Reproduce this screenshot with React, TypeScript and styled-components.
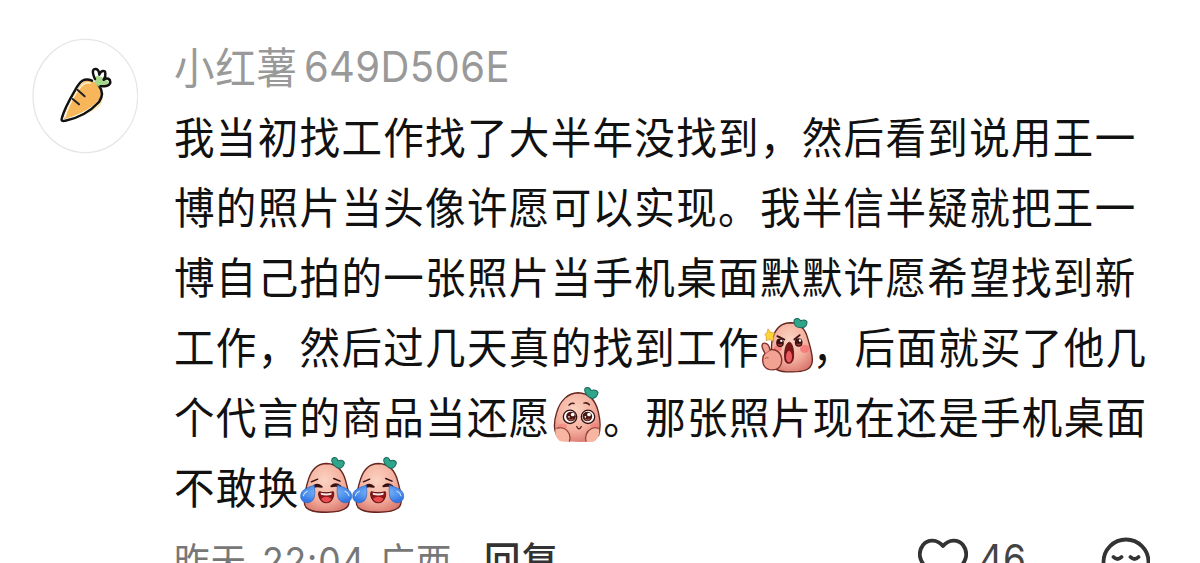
import React, { FC, ReactNode } from 'react';
import styled, { createGlobalStyle } from 'styled-components';

const GlobalStyle = createGlobalStyle`
  html, body {
    margin: 0;
    background: #fff;
  }
`;

const CommentContainer = styled.div`
  display: flex;
  box-sizing: border-box;
  width: 1200px;
  height: 563px;
  padding: 38px 0 0 32px;
  overflow: hidden;
  background: #fff;
  font-family: Inter, 'Noto Sans CJK SC', sans-serif;
`;

const Avatar = styled.svg`
  flex: none;
  width: 106px;
  height: 116px;
`;

const Content = styled.div`
  flex: none;
  width: 990px;
  margin-left: 36px;
`;

// glyphs are a little taller than they are wide
const Row = styled.div`
  display: flex;
  align-items: center;
  white-space: pre;
  transform: scaleY(1.07);
`;

const UserName = styled(Row)`
  height: 54px;
  margin-bottom: 8px;
  color: #999;
  font-size: 40.5px;
  letter-spacing: 0.8px;
`;

const Latin = styled.span`
  margin-top: 3px;
  margin-left: 6px;
  font-size: 40px;
  font-weight: 400;
  letter-spacing: 0.4px;
`;

const Line = styled(Row)`
  height: 70px;
  color: #111;
  font-family: 'Noto Sans CJK SC', sans-serif;
  font-size: 40.5px;
  font-weight: 400;
  letter-spacing: 1.35px;
`;

const Sticker = styled.svg`
  flex: none;
  width: 52.7px;
  height: 54px;
`;

const Footer = styled.div`
  display: flex;
  align-items: center;
  height: 60px;
  margin-top: 11px;
`;

const Meta = styled(Row)`
  width: 310px;
  margin-top: -5px;
  color: #777;
  font-size: 35.5px;
  letter-spacing: 1px;
`;

const Time = styled.span`
  margin: 5px 14px 0 15px;
  font-weight: 400;
  letter-spacing: 0.9px;
`;

const Reply = styled(Row)`
  width: 434px;
  margin-top: -5px;
  color: #333;
  font-size: 36.5px;
  font-weight: 500;
  letter-spacing: 1px;
`;

const Count = styled(Row)`
  width: 121px;
  margin-top: -5px;
  margin-left: 11px;
  color: #444;
  font-size: 37px;
`;

const ActionIcon = styled.svg`
  flex: none;
  width: 50px;
  height: 50px;
  fill: none;
  stroke: #333;
  stroke-width: 3.8;
  stroke-linecap: round;
  stroke-linejoin: round;
`;

const CarrotAvatar: FC = () => (
  <Avatar viewBox="36 24 318 348">
    <ellipse cx="196" cy="198" rx="157" ry="170" fill="#fff" stroke="#e6e6e6" strokeWidth="4" />
    <path d="M132 275 Q185 266 239 229 Q254 212 244 186 L236 218 Q195 256 132 275Z" fill="#fde9ad" />
    <path d="M180 166 Q206 137 232 164 Q254 190 232 216 Q190 253 132 268 Q146 217 180 166Z" fill="#f8b65b" />
    <path d="M216 152 C194 142 181 151 165 181 Q134 234 126 263 Q121 276 136 272 Q196 260 237 216 Q255 191 236 166" fill="none" stroke="#111" strokeWidth="7.5" strokeLinecap="round" />
    <path d="M213 160 C195 153 184 166 169 188 Q142 232 135 263" fill="none" stroke="#fff4cf" strokeWidth="4" />
    <path d="M224 159 Q222 146 230 137 Q250 140 267 157 Q257 172 239 172Z" fill="#a5d68a" />
    <path d="M225 147 C214 124 219 115 228 117 Q237 119 238 134 C243 120 255 120 256 129 Q258 139 251 149 C262 141 271 147 271 157 C269 170 253 169 241 169" fill="none" stroke="#111" strokeWidth="7.5" strokeLinecap="round" strokeLinejoin="round" />
    <path d="M173 180 L194 199 M158 207 L177 223" stroke="#222" strokeWidth="6" strokeLinecap="round" />
  </Avatar>
);

const Gradients: FC<{ id: string }> = ({ id }) => (
  <defs>
    <radialGradient id={`${id}-skin`} cx="45%" cy="35%" r="70%">
      <stop offset="0" stopColor="#fbd3c2" />
      <stop offset="0.6" stopColor="#f4af9e" />
      <stop offset="1" stopColor="#da786f" />
    </radialGradient>
    <radialGradient id={`${id}-tear`} cx="50%" cy="40%" r="60%">
      <stop offset="0" stopColor="#93c8ff" />
      <stop offset="1" stopColor="#3478e4" />
    </radialGradient>
  </defs>
);

const ShoutSticker: FC = () => (
  <Sticker viewBox="30 18 158 173" preserveAspectRatio="none">
    <Gradients id="shout" />
    <path d="M68 84 C76 56 95 38 122 38 C150 39 166 58 173 84 C181 112 188 132 187 152 C185 181 158 185 127 185 C96 186 70 182 67 160 C64 137 61 110 68 84Z" fill="url(#shout-skin)" stroke="#64261f" strokeWidth="4" />
    <path d="M136 47 Q127 31 137 26 Q147 22 152 32 Q166 26 171 35 Q172 50 157 53 Q145 54 136 47Z" fill="#2fa58c" stroke="#1c6657" strokeWidth="3" />
    <ellipse cx="164" cy="116" rx="14" ry="12" fill="#f46f70" opacity=".75" />
    <ellipse cx="84" cy="115" rx="12" ry="9" fill="#f46f70" opacity=".7" />
    <path d="M82 78 L103 88 M133 88 L149 75" stroke="#35100f" strokeWidth="5.5" strokeLinecap="round" />
    <ellipse cx="90" cy="98" rx="11.5" ry="13" fill="#3b1010" />
    <ellipse cx="146" cy="97" rx="11.5" ry="13" fill="#3b1010" />
    <path d="M84 102 Q90 108 96 102 M140 101 Q146 107 152 101" fill="none" stroke="#9e3733" strokeWidth="4" />
    <circle cx="94" cy="92" r="3.5" fill="#fff" />
    <circle cx="150" cy="91" r="3.5" fill="#fff" />
    <path d="M118 96 C128 97 133 125 130 144 C128 163 108 164 105 150 C101 129 106 99 118 96Z" fill="#7b1518" stroke="#4b1010" strokeWidth="2.5" />
    <path d="M117 122 C128 125 130 154 117 157 C104 155 106 126 117 122Z" fill="#ed5960" />
    <path d="M45 129 C34 113 33 101 42 99 C52 98 58 109 60 119 C76 115 93 126 95 146 C97 168 84 179 67 179 C47 179 37 165 38 148 C38 139 40 134 45 129Z" fill="#f2a293" stroke="#7e302b" strokeWidth="4" />
    <path d="M48 130 Q54 121 63 120 M44 146 Q50 140 56 143" fill="none" stroke="#a44a42" strokeWidth="2.5" />
    <path d="M54 56 Q58 68 74 69 Q67 77 71 94 Q61 84 48 91 Q52 79 44 73 Q54 70 54 56Z" fill="#ffd43b" stroke="#cf8c20" strokeWidth="2" />
  </Sticker>
);

const ShySticker: FC = () => (
  <Sticker viewBox="18 18 158 173" preserveAspectRatio="none">
    <Gradients id="shy" />
    <path d="M47 181 C27 171 26 127 35 97 C45 62 68 39 99 38 C133 39 152 62 160 95 C166 120 167 173 146 183 Q96 188 47 181Z" fill="url(#shy-skin)" />
    <path d="M36 168 C26 150 27 122 35 97 C45 62 68 39 99 38 C133 39 152 62 160 95 C166 120 168 145 160 168" fill="none" stroke="#64261f" strokeWidth="4" />
    <path d="M125 44 Q114 28 123 23 Q133 19 138 31 Q155 27 159 38 Q156 52 143 55 Q132 54 125 44Z" fill="#2fa58c" stroke="#1c6657" strokeWidth="3" />
    <ellipse cx="53" cy="138" rx="13" ry="8" fill="#f47d78" opacity=".6" />
    <ellipse cx="148" cy="137" rx="12" ry="8" fill="#f47d78" opacity=".6" />
    <path d="M72 75 Q78 67 87 70 M117 69 Q127 66 133 74" fill="none" stroke="#43201c" strokeWidth="4.5" strokeLinecap="round" />
    <circle cx="75" cy="110" r="20" fill="#fff" stroke="#35100f" strokeWidth="4" />
    <circle cx="129" cy="110" r="20" fill="#fff" stroke="#35100f" strokeWidth="4" />
    <circle cx="78" cy="109" r="14.5" fill="#4b1713" />
    <circle cx="127" cy="109" r="14.5" fill="#4b1713" />
    <path d="M71 116 Q78 123 85 116 M120 116 Q127 123 134 116" fill="none" stroke="#9c5044" strokeWidth="4" />
    <circle cx="83" cy="103" r="5.5" fill="#fff" />
    <circle cx="132" cy="103" r="5.5" fill="#fff" />
    <circle cx="72" cy="110" r="2.5" fill="#fff" />
    <circle cx="121" cy="110" r="2.5" fill="#fff" />
    <path d="M95 139 Q102 153 109 139" fill="none" stroke="#53201d" strokeWidth="4" strokeLinecap="round" />
    <path d="M31 149 C48 138 66 145 73 162 Q77 173 73 183 Q54 187 42 181 Q29 170 31 149Z M163 149 C149 138 130 145 124 162 Q120 174 123 183 Q141 187 152 181 Q164 169 163 149Z" fill="#f7b5a2" />
    <path d="M36 144 C53 140 66 146 73 162 Q77 173 73 183 M160 144 C145 140 130 146 124 162 Q120 174 123 183" fill="none" stroke="#8b3d35" strokeWidth="3.5" strokeLinecap="round" />
  </Sticker>
);

const CrySticker: FC<{ id: string }> = ({ id }) => (
  <Sticker viewBox="28 18 158 173" preserveAspectRatio="none">
    <Gradients id={id} />
    <path d="M54 86 C64 56 84 40 108 40 C140 41 157 62 165 92 C172 118 180 142 174 162 C167 184 134 186 107 186 C78 186 47 184 42 163 C38 142 47 108 54 86Z" fill={`url(#${id}-skin)`} stroke="#64261f" strokeWidth="4" />
    <path d="M128 44 Q118 28 128 23 Q138 19 142 32 Q157 27 161 38 Q159 52 147 55 Q135 53 128 44Z" fill="#2fa58c" stroke="#1c6657" strokeWidth="3" />
    <path d="M62 95 L81 87 M129 85 L148 93" stroke="#35100f" strokeWidth="4.5" strokeLinecap="round" />
    <path d="M68 110 Q78 98 93 110 Q80 107 68 110Z M122 108 Q135 97 149 108 Q135 105 122 108Z" fill="#35100f" stroke="#35100f" strokeWidth="6" strokeLinejoin="round" />
    <path d="M86 125 Q106 131 127 125 C132 131 127 158 107 158 C86 157 81 131 86 125Z" fill="#8c171a" stroke="#5c1512" strokeWidth="3" />
    <path d="M90 128 Q107 132 123 128 L122 134 Q107 138 91 134Z" fill="#fff" opacity=".9" />
    <path d="M91 146 Q107 134 122 146 Q117 157 107 156 Q96 156 91 146Z" fill="#ee4b4e" />
    <path d="M71 105 C55 111 30 116 30 138 C30 152 42 160 55 157 C76 151 73 128 71 105Z M140 105 C157 111 183 116 183 138 C183 152 171 160 158 157 C137 151 139 128 140 105Z" fill={`url(#${id}-tear)`} stroke="#2b63bd" strokeWidth="2" />
    <path d="M50 123 Q40 128 38 137 M163 123 Q173 128 175 137" fill="none" stroke="#c8e8ff" strokeWidth="3" strokeLinecap="round" />
  </Sticker>
);

const lines: ReactNode[] = [
  '我当初找工作找了大半年没找到，然后看到说用王一',
  '博的照片当头像许愿可以实现。我半信半疑就把王一',
  '博自己拍的一张照片当手机桌面默默许愿希望找到新',
  <>工作，然后过几天真的找到工作<ShoutSticker />，后面就买了他几</>,
  <>个代言的商品当还愿<ShySticker />。那张照片现在还是手机桌面</>,
  <>不敢换<CrySticker id="cry1" /><CrySticker id="cry2" /></>,
];

const App: FC = () => {
  return (
    <>
      <GlobalStyle />
      <CommentContainer>
        <CarrotAvatar />
        <Content>
          <UserName>
            小红薯<Latin>649D506E</Latin>
          </UserName>
          {lines.map((line, i) => (
            <Line key={i}>{line}</Line>
          ))}
          <Footer>
            <Meta>
              昨天<Time>22:04</Time>广西
            </Meta>
            <Reply>回复</Reply>
            <ActionIcon viewBox="0 0 50 50">
              <path d="M25 10 C19 3 10 3 5 9 C-1 17 2 26 9 32 L25 46 L41 32 C48 26 51 17 45 9 C40 3 31 3 25 10Z" />
            </ActionIcon>
            <Count>46</Count>
            <ActionIcon viewBox="-1 -1 50 50">
              <circle cx="25" cy="25" r="22.5" />
              <path d="M12.5 20 Q16.5 24 20.5 20 M29.5 20 Q33.5 24 37.5 20 M16 32 Q25 41 34 32" />
            </ActionIcon>
          </Footer>
        </Content>
      </CommentContainer>
    </>
  );
};

export default App;
